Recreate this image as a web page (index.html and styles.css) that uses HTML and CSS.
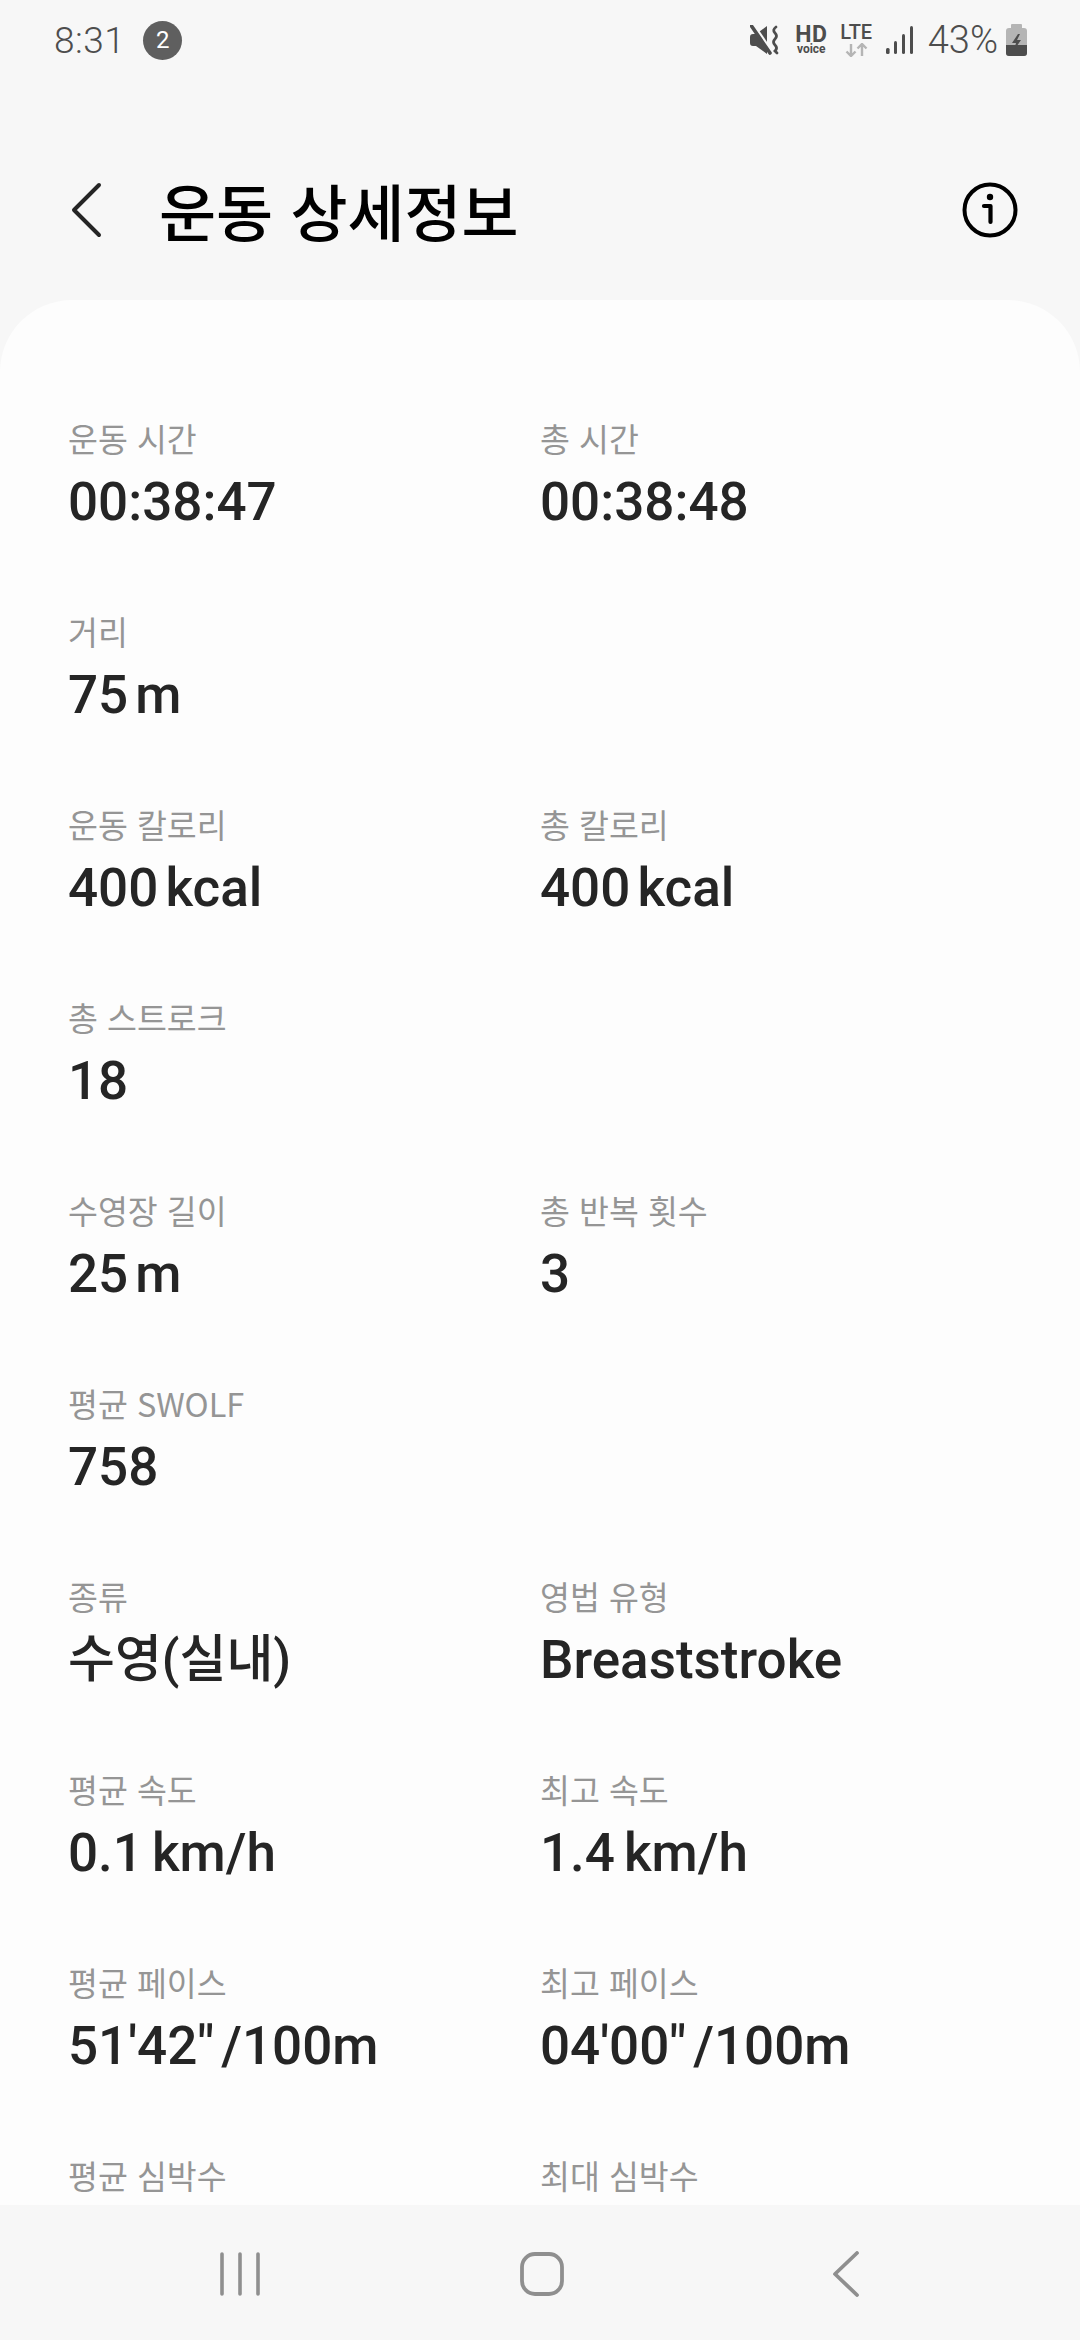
FILE: index.html
```html
<!DOCTYPE html>
<html lang="ko">
<head>
<meta charset="utf-8">
<title>운동 상세정보</title>
<link rel="stylesheet" href="styles.css">
</head>
<body>
<div class="app">
  <div class="status">
    <div class="status-left">
      <span class="time">8:31</span>
      <span class="badge">2</span>
    </div>
    <div class="status-right">
      <svg class="ic-mute" viewBox="0 0 30 30" width="30" height="30">
        <path d="M0 12 Q0 9 3 9 H6 L17 1 V29 L6 21 H3 Q0 21 0 18 Z" fill="#4d4d4d"/>
        <path d="M3 -1 L20 24" stroke="#f7f7f7" stroke-width="3"/>
        <path d="M1.500 1 L20 28" stroke="#4d4d4d" stroke-width="3.600" stroke-linecap="round"/>
        <path d="M26 2 Q22 5 25 8 Q28 11 25 14 Q22 17 25 20 Q28 23 25 26 L27 28" fill="none" stroke="#4d4d4d" stroke-width="2.800" stroke-linecap="round"/>
      </svg>
      <div class="hd">
        <span class="hd-main">HD</span>
        <span class="hd-sub">voice</span>
      </div>
      <div class="lte">
        <span class="lte-main">LTE</span>
        <svg viewBox="0 0 25 14" width="25" height="14">
          <path d="M7 1 V13 M2.500 8.500 L7 13 L11.500 8.500" fill="none" stroke="#b5b5b5" stroke-width="2.400"/>
          <path d="M18 13 V1 M13.500 5.500 L18 1 L22.500 5.500" fill="none" stroke="#b5b5b5" stroke-width="2.400"/>
        </svg>
      </div>
      <svg class="ic-signal" viewBox="0 0 27 30" width="27" height="30">
        <rect x="0" y="23" width="3.600" height="6" rx="1.500" fill="#4d4d4d"/>
        <rect x="8" y="16" width="3" height="13" rx="1.500" fill="#4d4d4d"/>
        <rect x="16" y="9" width="3" height="20" rx="1.500" fill="#4d4d4d"/>
        <rect x="24" y="1" width="3" height="28" rx="1.500" fill="#4d4d4d"/>
      </svg>
      <span class="pct">43%</span>
      <svg class="ic-batt" viewBox="0 0 21 32" width="21" height="32">
        <rect x="5" y="0" width="11" height="5" rx="1" fill="#b5b5b5"/>
        <rect x="0" y="4" width="21" height="28" rx="3" fill="#b5b5b5"/>
        <path d="M0 21 H21 V29 Q21 32 18 32 H3 Q0 32 0 29 Z" fill="#4d4d4d"/>
        <path d="M12 10 L6 19 H10 L8 26 L15 16 H11 L14 10 Z" fill="#4d4d4d"/>
      </svg>
    </div>
  </div>

  <header class="header">
    <svg class="ic-back" viewBox="0 0 32 56" width="32" height="56">
      <path d="M29 3 L4 28 L29 53" fill="none" stroke="#252525" stroke-width="4" stroke-linecap="round" stroke-linejoin="round"/>
    </svg>
    <h1 class="title">운동 상세정보</h1>
    <svg class="ic-info" viewBox="0 0 56 56" width="56" height="56">
      <circle cx="28" cy="28" r="25.500" fill="none" stroke="#000" stroke-width="4"/>
      <circle cx="28" cy="15" r="3.200" fill="#000"/>
      <path d="M22 24 H28.500 V40" fill="none" stroke="#000" stroke-width="4.200" stroke-linecap="round" stroke-linejoin="round"/>
    </svg>
  </header>

  <main class="card">
    <div class="grid">
      <div class="metric"><div class="label">운동 시간</div><div class="value">00:38:47</div></div>
      <div class="metric"><div class="label">총 시간</div><div class="value">00:38:48</div></div>

      <div class="metric"><div class="label">거리</div><div class="value">75<span class="unit">m</span></div></div>
      <div class="metric"></div>

      <div class="metric"><div class="label">운동 칼로리</div><div class="value">400<span class="unit">kcal</span></div></div>
      <div class="metric"><div class="label">총 칼로리</div><div class="value">400<span class="unit">kcal</span></div></div>

      <div class="metric"><div class="label">총 스트로크</div><div class="value">18</div></div>
      <div class="metric"></div>

      <div class="metric"><div class="label">수영장 길이</div><div class="value">25<span class="unit">m</span></div></div>
      <div class="metric"><div class="label">총 반복 횟수</div><div class="value">3</div></div>

      <div class="metric"><div class="label">평균 SWOLF</div><div class="value">758</div></div>
      <div class="metric"></div>

      <div class="metric"><div class="label">종류</div><div class="value value-ko">수영(실내)</div></div>
      <div class="metric"><div class="label">영법 유형</div><div class="value">Breaststroke</div></div>

      <div class="metric"><div class="label">평균 속도</div><div class="value">0.1<span class="unit unit-wide">km/h</span></div></div>
      <div class="metric"><div class="label">최고 속도</div><div class="value">1.4<span class="unit unit-wide">km/h</span></div></div>

      <div class="metric"><div class="label">평균 페이스</div><div class="value">51'42"<span class="unit">/100m</span></div></div>
      <div class="metric"><div class="label">최고 페이스</div><div class="value">04'00"<span class="unit">/100m</span></div></div>

      <div class="metric"><div class="label">평균 심박수</div></div>
      <div class="metric"><div class="label">최대 심박수</div></div>
    </div>
  </main>

  <nav class="navbar">
    <svg viewBox="0 0 40 44" width="40" height="44">
      <path d="M2 2 V42 M20 2 V42 M38 2 V42" fill="none" stroke="#8f8f8f" stroke-width="3.600" stroke-linecap="round"/>
    </svg>
    <svg viewBox="0 0 44 44" width="44" height="44">
      <rect x="2" y="2" width="40" height="40" rx="13" fill="none" stroke="#8f8f8f" stroke-width="3.800"/>
    </svg>
    <svg class="nav-back" viewBox="0 0 28 46" width="28" height="46">
      <path d="M25 2 L3 23 L25 44" fill="none" stroke="#8f8f8f" stroke-width="3.800" stroke-linecap="round" stroke-linejoin="round"/>
    </svg>
  </nav>
</div>
</body>
</html>
```
FILE: styles.css
```css
* { box-sizing: border-box; }
html, body { margin: 0; padding: 0; }
body {
  font-family: Roboto, "Noto Sans CJK KR", sans-serif;
  background: #f7f7f7;
}
.app {
  width: 1080px;
  height: 2340px;
  display: flex;
  flex-direction: column;
  overflow: hidden;
  background: #f7f7f7;
}
.status {
  height: 80px;
  flex: none;
  display: flex;
  align-items: center;
  justify-content: space-between;
  padding: 0 53px 0 54px;
  color: #4d4d4d;
}
.status-left { display: flex; align-items: center; gap: 18px; }
.time { font-size: 37px; font-weight: 300; letter-spacing: 0.5px; }
.badge {
  width: 39px;
  height: 39px;
  border-radius: 50%;
  background: #5f5f5f;
  color: #fff;
  font-size: 24px;
  display: flex;
  align-items: center;
  justify-content: center;
}
.status-right { display: flex; align-items: center; }
.ic-mute { margin-right: 15px; }
.hd { display: flex; flex-direction: column; align-items: center; width: 33px; margin-right: 12px; font-weight: 700; }
.hd-main { font-size: 23px; line-height: 18px; letter-spacing: 0.5px; }
.hd-sub { font-size: 12px; line-height: 10px; }
.lte { display: flex; flex-direction: column; align-items: center; width: 33px; gap: 2px; margin-right: 13px; }
.lte-main { font-size: 20px; line-height: 17px; font-weight: 500; }
.ic-signal { margin-right: 15px; }
.pct { font-size: 38px; font-weight: 300; margin-right: 8px; }

.header {
  height: 220px;
  flex: none;
  display: flex;
  align-items: center;
  padding: 40px 62px 0 70px;
}
.ic-back { flex: none; }
.title {
  flex: 1;
  margin: 0 0 0 57px;
  font-family: "Noto Sans CJK KR", sans-serif;
  font-size: 62px;
  font-weight: 500;
  line-height: 80px;
  color: #000;
}
.ic-info { flex: none; }

.card {
  flex: 1;
  min-height: 0;
  overflow: hidden;
  background: #fdfdfd;
  border-radius: 72px 72px 0 0;
  padding: 116px 0 0 68px;
}
.grid {
  display: grid;
  grid-template-columns: 472px 472px;
  grid-auto-rows: 124px;
  row-gap: 69px;
}
.label {
  font-family: "Noto Sans CJK KR", sans-serif;
  font-size: 32.500px;
  line-height: 44px;
  color: #959595;
}
.value {
  margin-top: 4px;
  font-size: 53px;
  font-weight: 500;
  line-height: 76px;
  color: #252525;
}
.value-ko { font-size: 51px; }
.unit { margin-left: 7px; }
.unit-wide { margin-left: 9px; }

.navbar {
  height: 135px;
  flex: none;
  display: flex;
  align-items: center;
  gap: 260px;
  padding: 3px 0 0 220px;
  background: #f7f7f7;
}
.nav-back { margin-left: 8px; }
```
